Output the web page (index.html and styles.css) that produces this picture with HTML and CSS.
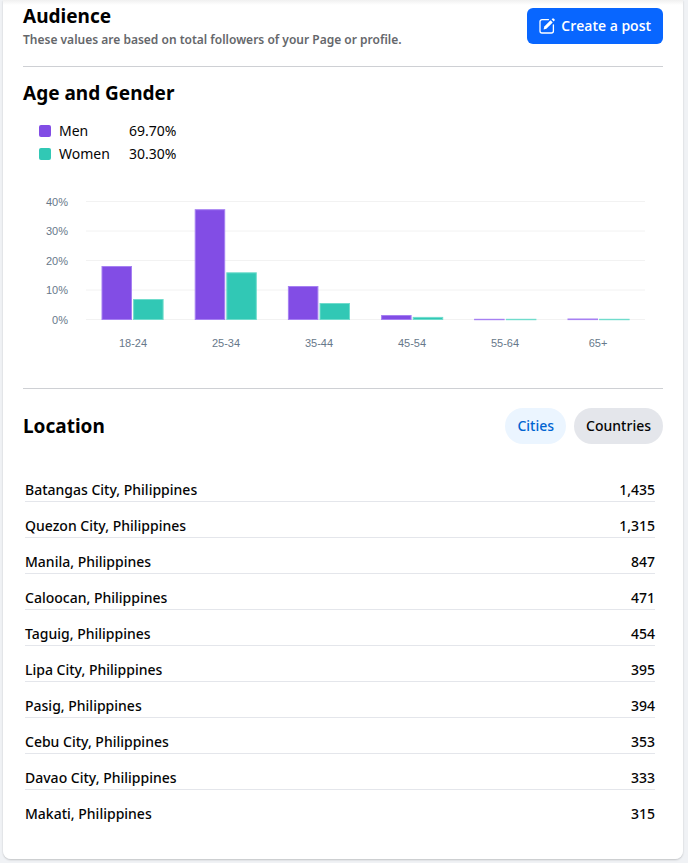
FILE: index.html
```html
<!DOCTYPE html>
<html lang="en">

<head>
  <meta charset="UTF-8">
  <meta name="viewport" content="width=device-width, initial-scale=1.0">
  <title>Audience</title>

  <link rel="stylesheet" href="styles.css">
</head>

<body>
  <main class="card">
    <header class="header">
      <div class="header-text">
        <h1 class="title">Audience</h1>
        <p class="subtitle">These values are based on total followers of your Page or profile.</p>
      </div>
      <button type="button" class="btn-create">
        <svg width="16" height="16" viewBox="0 0 16 16" fill="none" aria-hidden="true">
          <path d="M9.5 1.6H3A2 2 0 0 0 1 3.6V13a2 2 0 0 0 2 2h9.4a2 2 0 0 0 2-2V6.8" stroke="#fff" stroke-width="1.3" stroke-linecap="round"/>
          <path d="M4.6 11.4l.7-2.8 6.3-6.3 2.1 2.1-6.3 6.3z" fill="#fff"/>
          <path d="M12.6 1.3l.6-.6a1.2 1.2 0 0 1 1.7 0l.4.4a1.2 1.2 0 0 1 0 1.7l-.6.6z" fill="#fff"/>
        </svg>
        Create a post
      </button>
    </header>

    <section class="section age">
      <h2 class="title">Age and Gender</h2>
      <dl class="legend">
        <dt class="men">Men</dt>
        <dd>69.70%</dd>
        <dt class="women">Women</dt>
        <dd>30.30%</dd>
      </dl>

      <svg class="chart" viewBox="0 0 640 168" role="img" aria-label="Followers by age and gender">
        <!-- grid lines -->
        <g class="grid">
          <path d="M63 16.5H622"/>
          <path d="M63 46H622"/>
          <path d="M63 75.5H622"/>
          <path d="M63 105H622"/>
          <path d="M63 134.5H622"/>
        </g>
        <g class="axis axis-y">
          <text x="45" y="21">40%</text>
          <text x="45" y="50">30%</text>
          <text x="45" y="80">20%</text>
          <text x="45" y="109">10%</text>
          <text x="45" y="139">0%</text>
        </g>
        <!-- men -->
        <g class="bar-men">
          <rect x="79" y="81.5" width="29.5" height="53"/>
          <rect x="172.2" y="24.7" width="29.5" height="109.8"/>
          <rect x="265.4" y="101.5" width="29.5" height="33"/>
          <rect x="358.6" y="130.5" width="29.5" height="4"/>
          <rect x="451.6" y="134.3" width="29.5" height=".4"/>
          <rect x="545" y="134" width="29.5" height=".6"/>
        </g>
        <!-- women -->
        <g class="bar-women">
          <rect x="110.6" y="114.5" width="29.5" height="20"/>
          <rect x="203.8" y="87.8" width="29.5" height="46.7"/>
          <rect x="297" y="118.5" width="29.5" height="16"/>
          <rect x="390.2" y="132.4" width="29.5" height="2.1"/>
          <rect x="483.4" y="134.3" width="29.5" height=".4"/>
          <rect x="576.6" y="134.3" width="29.5" height=".4"/>
        </g>
        <g class="axis axis-x">
          <text x="110" y="162">18-24</text>
          <text x="203" y="162">25-34</text>
          <text x="296" y="162">35-44</text>
          <text x="389" y="162">45-54</text>
          <text x="482" y="162">55-64</text>
          <text x="575" y="162">65+</text>
        </g>
      </svg>
    </section>

    <section class="section location">
      <div class="location-head">
        <h2 class="title">Location</h2>
        <div class="tabs">
          <button type="button" class="tab active" aria-pressed="true">Cities</button>
          <button type="button" class="tab" aria-pressed="false">Countries</button>
        </div>
      </div>

      <table class="cities">
        <tbody>
          <tr><th scope="row">Batangas City, Philippines</th><td>1,435</td></tr>
          <tr><th scope="row">Quezon City, Philippines</th><td>1,315</td></tr>
          <tr><th scope="row">Manila, Philippines</th><td>847</td></tr>
          <tr><th scope="row">Caloocan, Philippines</th><td>471</td></tr>
          <tr><th scope="row">Taguig, Philippines</th><td>454</td></tr>
          <tr><th scope="row">Lipa City, Philippines</th><td>395</td></tr>
          <tr><th scope="row">Pasig, Philippines</th><td>394</td></tr>
          <tr><th scope="row">Cebu City, Philippines</th><td>353</td></tr>
          <tr><th scope="row">Davao City, Philippines</th><td>333</td></tr>
          <tr><th scope="row">Makati, Philippines</th><td>315</td></tr>
        </tbody>
      </table>
    </section>
  </main>
</body>

</html>
```
FILE: styles.css
```css
* {
  margin: 0;
  padding: 0;
  box-sizing: border-box;
}

body {
  padding: 0 5px 4px 3px;
  background: #f0f2f5;
  color: #050505;
  font-family: "Noto Sans", "Open Sans", sans-serif;
  font-size: 14px;
  line-height: 20px;
}

button {
  border: 0;
  font: inherit;
  cursor: pointer;
}

.card {
  padding: 0 20px 34px;
  background: linear-gradient(#f0f0f0, #fff 5px);
  border-radius: 0 0 8px 8px;
  box-shadow: 0 1px 2px rgba(0, 0, 0, 0.2);
}

.title {
  color: #000;
  font-size: 19px;
  font-weight: 700;
  line-height: 24px;
}

/* header */
.header {
  display: flex;
  justify-content: space-between;
  align-items: flex-start;
  padding: 4px 0 14px;
}

.subtitle {
  color: #65676b;
  font-size: 12px;
  font-weight: 600;
  line-height: 24px;
}

.btn-create {
  display: flex;
  align-items: center;
  gap: 6px;
  height: 36px;
  margin-top: 4px;
  padding: 0 12px;
  border-radius: 6px;
  background: #0866ff;
  color: #fff;
  font-family: "Open Sans", "Noto Sans", sans-serif;
  font-weight: 600;
  white-space: nowrap;
}

.section {
  border-top: 1px solid #ced0d4;
}

/* age and gender */
.age {
  padding: 14px 0 35px;
}

.legend {
  display: grid;
  grid-template-columns: 90px auto;
  justify-content: start;
  padding: 14px 16px 0;
  font-size: 14px;
  line-height: 23px;
}

.legend dt {
  display: flex;
  align-items: center;
  gap: 8px;
}

.legend dt::before {
  content: "";
  width: 12px;
  height: 12px;
  border-radius: 2px;
}

.men::before {
  background: #824de5;
}

.women::before {
  background: #31c8b5;
}

/* bar chart */
.chart {
  display: block;
  width: 100%;
  margin-top: 20px;
}

.grid {
  stroke: #f2f2f2;
}

.axis {
  fill: #67788a;
  font-family: "Liberation Sans", Arial, sans-serif;
  font-size: 11px;
}

.axis-y {
  text-anchor: end;
}

.axis-x {
  text-anchor: middle;
}

.bar-men {
  fill: #824de5;
  stroke: #a680f2;
}

.bar-women {
  fill: #31c8b5;
  stroke: #70dccc;
}

/* location */
.location-head {
  display: flex;
  justify-content: space-between;
  align-items: center;
  padding: 19px 0 21px;
}

.tabs {
  display: flex;
  gap: 8px;
}

.tab {
  height: 36px;
  padding: 0 12px;
  border-radius: 18px;
  background: #e4e6eb;
  color: #050505;
  font-weight: 500;
}

.tab.active {
  background: #ebf5ff;
  color: #0064d1;
}

.cities {
  width: calc(100% - 10px);
  margin-left: 2px;
  border-collapse: collapse;
}

.cities th,
.cities td {
  height: 36px;
  padding-bottom: 1px;
  border-bottom: 1px solid #e4e6eb;
  font-weight: 500;
  text-align: left;
  vertical-align: bottom;
}

.cities td {
  text-align: right;
}

.cities tr:last-child > * {
  border-bottom: 0;
}
```
